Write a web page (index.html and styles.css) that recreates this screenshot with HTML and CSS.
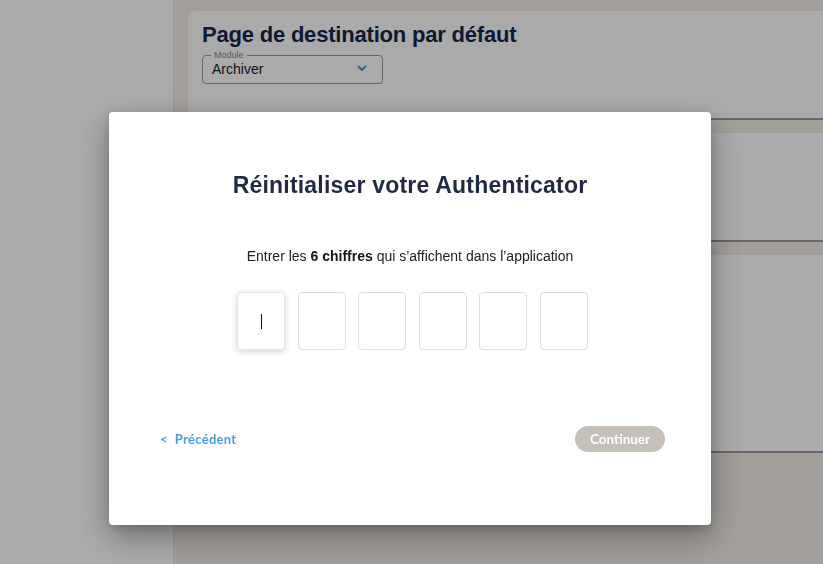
FILE: index.html
```html
<!DOCTYPE html>
<html lang="fr">
<head>
<meta charset="utf-8">
<title>Réinitialiser votre Authenticator</title>
<link rel="stylesheet" href="styles.css">
</head>
<body>
<div class="app">
  <aside class="sidebar"></aside>
  <main class="main">
    <section class="card card-1">
      <h2 class="card-title">Page de destination par défaut</h2>
      <fieldset class="select">
        <legend class="select-label">Module</legend>
        <span class="select-value">Archiver</span>
        <svg class="chevron" width="10" height="7" viewBox="0 0 10 7"><path d="M1.5 1.5 L5 5 L8.5 1.5" fill="none" stroke="#3d97d3" stroke-width="1.8" stroke-linecap="round" stroke-linejoin="round"/></svg>
      </fieldset>
    </section>
    <section class="card card-2"></section>
    <section class="card card-3"></section>
  </main>
</div>

<div class="overlay">
  <div class="modal">
    <h1 class="modal-title">Réinitialiser votre Authenticator</h1>
    <p class="modal-text">Entrer les <strong>6 chiffres</strong> qui s’affichent dans l’application</p>
    <div class="code">
      <div class="digit focused"><span class="caret"></span></div>
      <div class="digit"></div>
      <div class="digit"></div>
      <div class="digit"></div>
      <div class="digit"></div>
      <div class="digit"></div>
    </div>
    <div class="modal-footer">
      <a class="back">&lt;&nbsp; Précédent</a>
      <button class="continue" disabled>Continuer</button>
    </div>
  </div>
</div>
</body>
</html>
```

FILE: styles.css
```css
* { box-sizing: border-box; }

html, body {
  margin: 0;
  height: 100%;
}

body {
  font-family: "Liberation Sans", Arial, sans-serif;
  overflow: hidden;
}

.app {
  display: flex;
  height: 564px;
}

.sidebar {
  width: 174px;
  flex: none;
  background: #ffffff;
  border-right: 1px solid #e6e6e6;
}

.main {
  flex: 1;
  background: #f3eee8;
  padding: 11px 0 0 14px;
  display: flex;
  flex-direction: column;
}

.card {
  background: #ffffff;
  border-radius: 8px 0 0 8px;
  border-bottom: 2px solid #9c9c9c;
  margin-bottom: 13px;
}

.card-1 {
  height: 109px;
  padding: 11px 0 0 14px;
}

.card-2 {
  height: 109px;
}

.card-3 {
  height: 198px;
}

.card-title {
  margin: 0;
  font-size: 22px;
  line-height: 26px;
  font-weight: 700;
  color: #13284e;
  letter-spacing: -0.2px;
}

.select {
  margin: 3px 0 0 0;
  width: 181px;
  height: 33px;
  border: 1px solid #9a9a9a;
  border-radius: 4px;
  padding: 0 10px 0 9px;
  display: flex;
  align-items: center;
}

.select-label {
  font-size: 9px;
  line-height: 9px;
  color: #888888;
  padding: 0 3px;
  margin-left: -1px;
}

.select-value {
  font-size: 14px;
  color: #1b1b1b;
  margin-top: -6px;
  flex: 1;
}

.chevron {
  margin-top: -6px;
  margin-right: 5px;
}

.overlay {
  position: fixed;
  inset: 0;
  background: rgba(0, 0, 0, 0.333);
  display: flex;
  justify-content: center;
  align-items: flex-start;
  padding: 112px 3px 0 0;
}

.modal {
  width: 602px;
  height: 413px;
  background: #ffffff;
  border-radius: 4px;
  box-shadow: 0 12px 30px rgba(0, 0, 0, 0.35), 0 2px 8px rgba(0, 0, 0, 0.15);
  display: flex;
  flex-direction: column;
  align-items: center;
  padding: 60px 46px 0 51px;
}

.modal-title {
  margin: 0 5px 0 0;
  font-size: 23px;
  line-height: 26px;
  font-weight: 700;
  color: #1f2b44;
  letter-spacing: 0.2px;
}

.modal-text {
  margin: 49px 5px 0 0;
  font-size: 14px;
  line-height: 18px;
  color: #222222;
}

.modal-text strong {
  color: #151515;
}

.code {
  margin: 27px 0 0 0;
  display: flex;
  gap: 12.6px;
}

.digit {
  width: 48px;
  height: 58px;
  border: 1px solid #dedede;
  border-radius: 4px;
  background: #ffffff;
  display: flex;
  align-items: center;
  justify-content: center;
}

.digit.focused {
  border-color: #e6e6e6;
  box-shadow: 0 2px 6px rgba(0, 0, 0, 0.16);
}

.caret {
  width: 1px;
  height: 15px;
  background: #111111;
  margin-top: 1px;
}

.modal-footer {
  align-self: stretch;
  margin-top: 76px;
  display: flex;
  justify-content: space-between;
  align-items: center;
}

.back {
  font-family: Lato, "Liberation Sans", sans-serif;
  font-weight: 700;
  font-size: 13px;
  letter-spacing: 0.3px;
  color: #4c9fde;
  cursor: pointer;
}

.continue {
  font-family: Lato, "Liberation Sans", sans-serif;
  font-weight: 700;
  font-size: 13.5px;
  color: #ffffff;
  background: #c5c0ba;
  border: none;
  border-radius: 13px;
  width: 90px;
  height: 26px;
  padding: 0;
}
```
